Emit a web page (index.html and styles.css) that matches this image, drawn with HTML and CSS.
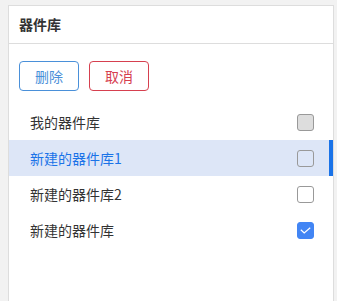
FILE: index.html
```html
<!DOCTYPE html>
<html lang="zh">
<head>
  <meta charset="UTF-8" />
  <title>器件库</title>
  <link rel="stylesheet" href="styles.css">
</head>
<body>
  <div class="panel">
    <div class="panel-head">器件库</div>
    <div class="actions">
      <button class="btn btn-del">删除</button>
      <button class="btn btn-cancel">取消</button>
    </div>
    <ul class="lib-list">
      <li class="lib-item">
        <span>我的器件库</span>
        <span class="check disabled"></span>
      </li>
      <li class="lib-item active">
        <span>新建的器件库1</span>
        <span class="check"></span>
      </li>
      <li class="lib-item">
        <span>新建的器件库2</span>
        <span class="check"></span>
      </li>
      <li class="lib-item">
        <span>新建的器件库</span>
        <span class="check checked">
          <svg width="11" height="7" viewBox="0 0 11 7"><path d="M0.8 2.8 L4.2 6 L10.2 0.8" fill="none" stroke="#fff" stroke-width="1.2"/></svg>
        </span>
      </li>
    </ul>
  </div>
</body>
</html>
```

FILE: styles.css
```css
body {
  margin: 0;
  background: #f2f2f2;
  font-family: "Noto Sans CJK SC", "Noto Sans", sans-serif;
  color: #333;
}

.panel {
  width: 324px;
  height: 320px;
  margin: 5px 0 0 8px;
  background: #fff;
  border: 1px solid #ddd;
}

.panel-head {
  height: 37px;
  line-height: 37px;
  padding-left: 10px;
  font-size: 14px;
  font-weight: bold;
  border-bottom: 1px solid #ddd;
}

.actions {
  display: flex;
  gap: 10px;
  padding: 17px 0 0 10px;
}

.btn {
  width: 60px;
  height: 30px;
  background: #fff;
  border-radius: 4px;
  font-family: inherit;
  font-size: 14px;
  cursor: pointer;
}

.btn-del {
  border: 1px solid #4a90d9;
  color: #4a90d9;
}

.btn-cancel {
  border: 1px solid #d6404f;
  color: #d6404f;
}

.lib-list {
  list-style: none;
  margin: 13px 0 0;
  padding: 0;
}

.lib-item {
  display: flex;
  align-items: center;
  justify-content: space-between;
  height: 36px;
  padding: 0 15px 0 21px;
  font-size: 14px;
  border-right: 4px solid transparent;
}

.lib-item.active {
  background: #dde6f7;
  color: #1a73e8;
  border-right-color: #1a73e8;
}

.check {
  display: flex;
  align-items: center;
  justify-content: center;
  width: 15px;
  height: 15px;
  border: 1px solid #999;
  border-radius: 3px;
  background: #fff;
}

.lib-item.active .check { background: transparent; }
.check.disabled { background: #ddd; }

.check.checked {
  background: #4285f4;
  border-color: #4285f4;
}
```
